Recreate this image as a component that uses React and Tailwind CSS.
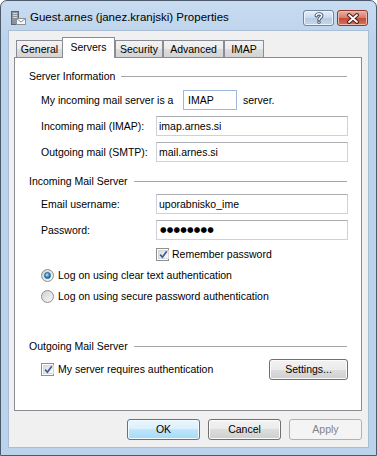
import React from "react";

const tabs = [
  { label: "General", w: "w-[47px]" },
  { label: "Servers", w: "w-[53px]", active: true },
  { label: "Security", w: "w-[48px]" },
  { label: "Advanced", w: "w-[61px]" },
  { label: "IMAP", w: "w-[40px]" },
];

function TitleIcon() {
  return (
    <svg width="16" height="16" viewBox="0 0 16 16" className="shrink-0">
      <rect x="1.5" y="1.5" width="7" height="13" fill="#8d949b" stroke="#5d646b" />
      <rect x="3" y="3" width="4" height="1" fill="#d6dadd" />
      <rect x="3" y="5" width="4" height="1" fill="#d6dadd" />
      <rect x="3" y="7" width="4" height="1" fill="#d6dadd" />
      <rect x="6.5" y="8.5" width="9" height="6" fill="#f4f6f8" stroke="#8a9299" />
      <path d="M6.5 8.5 L11 12 L15.5 8.5" fill="none" stroke="#8a9299" />
    </svg>
  );
}

function HelpButton() {
  return (
    <div className="w-[31px] h-[16px] rounded-[3px] border border-[#6f849d] bg-[linear-gradient(#e6eef8,#c9d9ec_50%,#b5cbe4_50%,#c4d7ec)] shadow-[inset_0_0_0_1px_#eef4fb] flex items-center justify-center">
      <svg width="10" height="12" viewBox="0 0 10 12">
        <path d="M2.3 3.8 C2.3 1.2 7.7 1.2 7.7 3.8 C7.7 5.8 5 5.6 5 7.8" fill="none" stroke="#3e5068" strokeWidth="3.4" strokeLinecap="round" />
        <circle cx="5" cy="10.2" r="1.6" fill="#3e5068" />
        <path d="M2.3 3.8 C2.3 1.2 7.7 1.2 7.7 3.8 C7.7 5.8 5 5.6 5 7.8" fill="none" stroke="#ffffff" strokeWidth="1.5" strokeLinecap="round" />
        <circle cx="5" cy="10.2" r="0.8" fill="#ffffff" />
      </svg>
    </div>
  );
}

function CloseButton() {
  return (
    <div className="w-[31px] h-[16px] rounded-[3px] border border-[#8c3a2e] bg-[linear-gradient(#eab1a5,#d47b69_50%,#c34a35_50%,#d5735b)] shadow-[inset_0_0_0_1px_#efb9ad] flex items-center justify-center">
      <svg width="14" height="11" viewBox="0 0 14 11">
        <path d="M3 2 L11 9 M11 2 L3 9" stroke="#4a1c14" strokeWidth="3.8" strokeLinecap="round" />
        <path d="M3 2 L11 9 M11 2 L3 9" stroke="#ffffff" strokeWidth="1.8" strokeLinecap="round" />
      </svg>
    </div>
  );
}

function CheckBox() {
  return (
    <span className="w-[13px] h-[13px] border border-[#8e8f8f] bg-white p-px flex shrink-0">
      <span className="flex-1 border border-[#d8d8d8] bg-[linear-gradient(135deg,#dcdcdc,#fbfbfb)] flex items-center justify-center">
        <svg width="9" height="9" viewBox="0 0 9 9">
          <path d="M1.2 4.6 L3.4 7.2 L7.8 1.2" fill="none" stroke="#3b5a9e" strokeWidth="1.7" />
        </svg>
      </span>
    </span>
  );
}

function Radio({ checked }) {
  return (
    <span className="w-[13px] h-[13px] rounded-full border border-[#8e8f8f] bg-[linear-gradient(135deg,#d0d0d0,#f8f8f8)] flex items-center justify-center shrink-0">
      {checked ? (
        <span className="w-[7px] h-[7px] rounded-full bg-[radial-gradient(circle_at_40%_35%,#bde8fd,#2f86c8_55%,#124a80)] border border-[#1b5d95]" />
      ) : null}
    </span>
  );
}

function Field({ children, className = "" }) {
  return (
    <div className={`h-[20px] bg-white border border-[#cdd1d8] border-t-[#abadb3] flex items-center pl-[2px] ${className}`}>
      {children}
    </div>
  );
}

function Row({ label, children, className = "" }) {
  return (
    <div className={`flex items-center pl-[26px] pr-[13px] ${className}`}>
      <span className="w-[115px] shrink-0">{label}</span>
      <Field className="flex-1">{children}</Field>
    </div>
  );
}

function GroupLabel({ text, className = "" }) {
  return (
    <div className={`flex items-center h-[16px] pl-[14px] pr-[14px] ${className}`}>
      <span>{text}</span>
      <div className="flex-1 h-px bg-[#a6a6a6] ml-[6px]" />
    </div>
  );
}

function Button({ children, kind }) {
  const look =
    kind === "default"
      ? "border-[#3c7fb1] bg-[linear-gradient(#eaf6fd,#d9f0fc_50%,#bee6fd_50%,#a7d9f5)] shadow-[inset_0_0_0_1px_#f4fbff]"
      : kind === "disabled"
      ? "border-[#adb2b5] bg-[#f4f4f4] text-[#838383]"
      : "border-[#707070] bg-[linear-gradient(#f2f2f2,#ebebeb_50%,#dddddd_50%,#cfcfcf)] shadow-[inset_0_0_0_1px_#fcfcfc]";
  return (
    <div className={`h-[21px] rounded-[3px] border flex items-center justify-center ${look}`}>
      {children}
    </div>
  );
}

export default function App() {
  return (
    <div className="w-[377px] h-[456px] bg-white font-['Liberation_Sans',Arial,sans-serif] text-black">
      <div className="w-full h-full flex flex-col rounded-t-[7px] border border-[#4c5a6b] bg-[linear-gradient(#c8dcf1,#bcd3ec_40px,#bcd3ec)]">
        {/* title bar */}
        <div className="h-[29px] shrink-0 flex items-center pt-[5px] pl-[9px] pr-[8px]">
          <TitleIcon />
          <span className="ml-[4px] text-[11.5px] leading-none">Guest.arnes (janez.kranjski) Properties</span>
          <div className="ml-auto flex items-center gap-[3px]">
            <HelpButton />
            <CloseButton />
          </div>
        </div>

        {/* client area */}
        <div className="mx-[7px] h-[418px] bg-[#f0f0f0] border border-[#a9bdd4] flex flex-col text-[10.5px] leading-none">
          <div className="pt-[6px] pl-[7px] flex items-end h-[26px] relative z-10">
            {tabs.map((t) =>
              t.active ? (
                <div
                  key={t.label}
                  className={`${t.w} h-[21px] -ml-px -mb-px bg-white border border-b-0 border-[#898c95] flex items-center justify-center pb-[1px]`}
                >
                  {t.label}
                </div>
              ) : (
                <div
                  key={t.label}
                  className={`${t.w} h-[17px] border border-b-0 border-[#898c95] bg-[linear-gradient(#f3f3f3,#ebebeb_50%,#dddddd_50%,#d3d3d3)] flex items-center justify-center pt-[1px]`}
                >
                  {t.label}
                </div>
              )
            )}
          </div>

          <div className="ml-[5px] w-[348px] h-[354px] bg-white border border-[#898c95] flex flex-col">
            <GroupLabel text="Server Information" className="mt-[10px]" />
            <div className="flex items-center pl-[26px] h-[20px] mt-[6px]">
              <span className="w-[142px] shrink-0">My incoming mail server is a</span>
              <div className="w-[54px] h-[20px] border border-[#9cb8dc] bg-white flex items-center pl-[4px]">IMAP</div>
              <span className="ml-[6px]">server.</span>
            </div>
            <Row label="Incoming mail (IMAP):" className="mt-[6px]">imap.arnes.si</Row>
            <Row label="Outgoing mail (SMTP):" className="mt-[6px]">mail.arnes.si</Row>

            <GroupLabel text="Incoming Mail Server" className="mt-[11px]" />
            <Row label="Email username:" className="mt-[5px]">uporabnisko_ime</Row>
            <Row label="Password:" className="mt-[6px]">
              <span className="font-['DejaVu_Sans',sans-serif] text-[7.5px] tracking-[0.2px] pl-[1px]">●●●●●●●●</span>
            </Row>
            <div className="flex items-center h-[16px] mt-[6px] pl-[141px] gap-[3px]">
              <CheckBox />
              <span>Remember password</span>
            </div>
            <div className="flex items-center h-[16px] mt-[5px] pl-[26px] gap-[4px]">
              <Radio checked />
              <span>Log on using clear text authentication</span>
            </div>
            <div className="flex items-center h-[16px] mt-[5px] pl-[26px] gap-[4px]">
              <Radio />
              <span>Log on using secure password authentication</span>
            </div>

            <GroupLabel text="Outgoing Mail Server" className="mt-[34px]" />
            <div className="flex items-center h-[21px] mt-[5px] pl-[26px] pr-[13px] gap-[4px]">
              <CheckBox />
              <span>My server requires authentication</span>
              <div className="ml-auto w-[79px]">
                <Button>Settings...</Button>
              </div>
            </div>
          </div>

          <div className="mt-[8px] mr-[6px] flex justify-end gap-[8px]">
            <div className="w-[73px]"><Button kind="default">OK</Button></div>
            <div className="w-[73px]"><Button>Cancel</Button></div>
            <div className="w-[73px]"><Button kind="disabled">Apply</Button></div>
          </div>
        </div>
      </div>
    </div>
  );
}
